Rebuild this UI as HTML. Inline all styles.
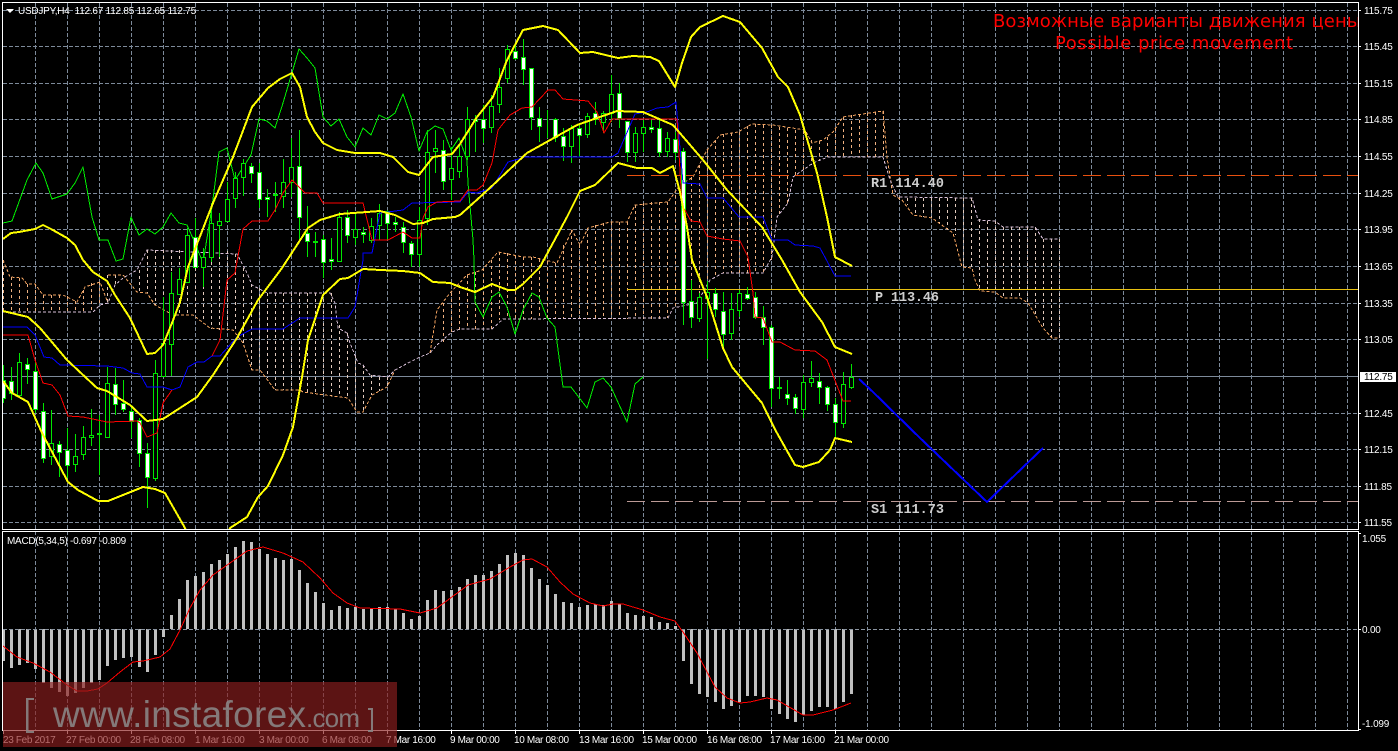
<!DOCTYPE html>
<html lang="en"><head><meta charset="utf-8"><title>USDJPY,H4</title>
<style>
html,body{margin:0;padding:0;background:#000;width:1398px;height:751px;overflow:hidden}
svg{display:block}
.t{font-family:"Liberation Sans",sans-serif;font-size:10px;fill:#fff;letter-spacing:-.2px}
.d{font-family:"Liberation Sans",sans-serif;font-size:10px;fill:#fff;letter-spacing:-.35px}
.m{font-family:"Liberation Mono",monospace;font-size:13.5px;font-weight:bold;fill:#cfcfcf}
.l{fill:none;stroke-linejoin:round;shape-rendering:crispEdges}
</style></head><body>
<svg width="1398" height="751" viewBox="0 0 1398 751" xmlns="http://www.w3.org/2000/svg">
<defs>
<clipPath id="c1"><rect x="3" y="3" width="1355" height="526"/></clipPath>
<clipPath id="c2"><rect x="3" y="532" width="1355" height="198"/></clipPath>
<clipPath id="c3"><rect x="900" y="3" width="458" height="60"/></clipPath>
</defs>
<rect width="1398" height="751" fill="#000"/>
<!-- grid -->
<g fill="none" stroke="#7d8a9a" stroke-width="1" stroke-dasharray="4 2" shape-rendering="crispEdges">
<path d="M35.5 3V730M67.5 3V730M99.5 3V730M131.5 3V730M163.5 3V730M195.5 3V730M227.5 3V730M259.5 3V730M291.5 3V730M323.5 3V730M355.5 3V730M387.5 3V730M419.5 3V730M451.5 3V730M483.5 3V730M515.5 3V730M547.5 3V730M579.5 3V730M611.5 3V730M643.5 3V730M675.5 3V730M707.5 3V730M739.5 3V730M771.5 3V730M803.5 3V730M835.5 3V730M867.5 3V730M899.5 3V730M931.5 3V730M963.5 3V730M995.5 3V730M1027.5 3V730M1059.5 3V730M1091.5 3V730M1123.5 3V730M1155.5 3V730M1187.5 3V730M1219.5 3V730M1251.5 3V730M1283.5 3V730M1315.5 3V730M1347.5 3V730"/>
<path d="M3 10.5H1358M3 46.5H1358M3 83.5H1358M3 119.5H1358M3 156.5H1358M3 193.5H1358M3 229.5H1358M3 266.5H1358M3 303.5H1358M3 339.5H1358M3 413.5H1358M3 449.5H1358M3 486.5H1358M3 522.5H1358"/>
</g>
<path d="M3 376.5H1358" stroke="#7d8a9a" shape-rendering="crispEdges"/>
<g clip-path="url(#c1)">
<!-- cloud hatch -->
<g fill="none" stroke-width="1" stroke-dasharray="3 3" shape-rendering="crispEdges">
<path stroke="#eeb080" d="M3.5 260V312M11.5 277V312M19.5 278V312M27.5 284V312M35.5 284V312M43.5 295V312M51.5 295V312M59.5 295V312M67.5 296V312M75.5 301V312M83.5 290V312M91.5 283V312M99.5 282V306M443.5 303V345M451.5 293V332M459.5 285V330M467.5 275V329M475.5 272V329M483.5 268V329M491.5 260V329M499.5 252V320M507.5 253V319M515.5 255V319M523.5 257V319M531.5 257V319M539.5 259V319M547.5 261V319M555.5 263V319M563.5 245V319M571.5 230V319M579.5 245V319M587.5 228V319M595.5 225V319M603.5 223V319M611.5 222V319M619.5 222V319M627.5 222V319M635.5 205V319M643.5 203V319M651.5 202V319M659.5 202V319M667.5 202V318M675.5 195V308M683.5 183V305M691.5 177V303M699.5 165V300M707.5 150V285M715.5 140V277M723.5 134V273M731.5 133V273M739.5 132V273M747.5 126V273M755.5 124V273M763.5 125V273M771.5 125V262M779.5 127V215M787.5 128V205M795.5 130V177M803.5 131V170M811.5 140V165M819.5 141V160M827.5 137V157M835.5 128V157M843.5 117V157M851.5 115V157M859.5 114V157M867.5 113V157M875.5 112V157M883.5 111V157"/>
<path stroke="#e2cabc" d="M107.5 275V303M115.5 275V285M139.5 270V292M147.5 250V293M155.5 250V305M163.5 250V312M171.5 250V315M179.5 250V315M187.5 250V315M195.5 250V316M203.5 250V322M211.5 250V329M219.5 250V330M227.5 251V330M235.5 254V330M243.5 268V343M251.5 284V370M259.5 288V370M267.5 293V378M275.5 293V390M283.5 293V390M291.5 293V390M299.5 293V390M307.5 293V392M315.5 293V394M323.5 293V395M331.5 293V396M339.5 325V397M347.5 333V398M355.5 355V410M363.5 365V412M371.5 375V395M379.5 377V391M387.5 377V387M891.5 185V190M899.5 197V200M907.5 198V205M915.5 198V214M923.5 198V217M931.5 198V218M939.5 198V224M947.5 198V230M955.5 198V235M963.5 198V268M971.5 198V270M979.5 219V291M987.5 221V291M995.5 221V292M1003.5 227V298M1011.5 227V298M1019.5 227V298M1027.5 227V303M1035.5 227V315M1043.5 239V328M1051.5 239V338M1059.5 239V338"/>
</g>
<!-- cloud spans -->
<polyline class="l" stroke="#f4a460" stroke-dasharray="3 2" points="3,260 10,277 22,278 27,284 35,284 43,295 63,295 77,302 85,287 100,282 108,303"/>
<polyline class="l" stroke="#f4a460" stroke-dasharray="3 2" points="108,275 123,275 128,281 137,292 147,293 155,305 173,315 193,315 210,328 233,330 243,343 252,370 260,370 275,390 300,390 303,392 340,397 348,398 357,412 363,412 372,395 387,387 395,370"/>
<polyline class="l" stroke="#f4a460" stroke-dasharray="3 2" points="430,353 437,310 450,293 467,275 482,270 498,252 523,257 533,257 557,263 572,230 580,245 588,228 610,222 627,222 635,205 668,202 680,185 693,177 707,150 720,135 738,132 752,124 773,125 805,130 812,143 823,140 833,132 843,117 883,111 887,157 893,195 902,200 913,215 932,218 953,233 962,267 972,268 975,280 980,291 995,292 1003,298 1020,298 1028,303 1043,328 1052,338 1059,338"/>
<polyline class="l" stroke="#d8bfd8" stroke-dasharray="3 2" points="3,312 93,312 100,305 108,303 115,285 123,278 137,270 147,250 237,254 247,273 252,285 267,293 330,293 335,303 338,328 347,333 350,343 358,363 363,365 370,375 388,377 395,370 410,362 420,357 430,353 437,345 452,332 460,329 492,329 503,319 668,318 673,308 697,303 710,280 723,273 763,273 772,257 777,217 788,203 793,177 813,163 828,157 883,157 890,180 898,197 972,198 978,220 995,221 1003,227 1035,227 1043,239 1059,239"/>
<!-- levels -->
<g shape-rendering="crispEdges" fill="none">
<path d="M627 175.5H1358" stroke="#e8500f" stroke-dasharray="18 6"/>
<path d="M627 289.5H1358" stroke="#e8c010"/>
<path d="M627 501.5H1358" stroke="#bc9a96" stroke-dasharray="18 6"/>
</g>
<!-- chikou -->
<polyline class="l" stroke="#00f000" points="3,223 12,221 27,180 36,163 43,173 52,199 67,194 75,183 83,167 92,217 99,240 108,240 116,261 123,259 131,217 139,235 147,229 155,234 163,227 171,213 179,223 187,225 195,243 203,263 212,207 219,152 227,148 235,180 251,155 259,119 267,121 275,128 283,103 299,49 307,58 315,68 323,117 331,126 339,119 347,137 355,147 363,128 371,135 379,115 387,119 395,113 403,94 411,117 419,151 427,132 435,126 443,129 451,150 459,138 467,160 468,183 473,240 474,260 475,302 483,317 492,297 499,292 507,307 515,334 523,310 532,293 539,297 547,318 555,327 563,387 571,387 587,408 595,382 603,378 611,387 627,422 635,384 643,377"/>
<!-- candles -->
<path fill="none" stroke="#00e600" shape-rendering="crispEdges" d="M3.5 365V403M11.5 367V400M19.5 353V395M27.5 358V384M35.5 362V413M43.5 403V463M51.5 410V465M59.5 441V477M67.5 428V478M75.5 434V472M83.5 426V460M91.5 409V446M99.5 415V475M107.5 367V437M115.5 368V415M123.5 380V412M131.5 405V438M139.5 418V467M147.5 443V508M155.5 360V481M163.5 297V376M171.5 272V376M179.5 268V294M187.5 228V282M195.5 218V267M203.5 248V287M211.5 203V262M219.5 213V257M227.5 182V222M235.5 172V208M243.5 159V196M251.5 163V183M259.5 163V208M267.5 189V217M275.5 182V212M283.5 159V208M291.5 138V197M299.5 130V240M307.5 206V257M315.5 232V257M323.5 235V278M331.5 238V270M339.5 212V262M347.5 210V243M355.5 213V245M363.5 227V243M371.5 218V243M379.5 204V240M387.5 210V240M395.5 217V232M403.5 222V253M411.5 241V267M419.5 207V267M427.5 130V225M435.5 130V173M443.5 140V190M451.5 147V200M459.5 145V178M467.5 107V160M475.5 115V152M483.5 105V143M491.5 95V133M499.5 68V113M507.5 45V83M515.5 45V60M523.5 39V85M531.5 68V130M539.5 107V142M547.5 110V138M555.5 118V142M563.5 128V161M571.5 125V163M579.5 123V157M587.5 113V138M595.5 102V125M603.5 111V133M611.5 75V122M619.5 83V128M627.5 121V162M635.5 127V162M643.5 120V152M651.5 120V133M659.5 120V157M667.5 132V157M675.5 132V160M683.5 148V325M691.5 280V328M699.5 293V322M707.5 281V359M715.5 288V317M723.5 292V350M731.5 293V340M739.5 290V317M747.5 287V300M755.5 292V319M763.5 306V345M771.5 325V407M779.5 377V399M787.5 380V405M795.5 394V414M803.5 375V418M811.5 361V387M819.5 373V404M827.5 386V411M835.5 398V437M843.5 372V428M851.5 364V389"/>
<path fill="#000" stroke="#00e600" shape-rendering="crispEdges" d="M17.5 362.5h4v33h-4zM49.5 443.5h4v13h-4zM73.5 456.5h4v8h-4zM81.5 437.5h4v17h-4zM89.5 435.5h4v2h-4zM97.5 433.5h4v1h-4zM105.5 383.5h4v54h-4zM153.5 373.5h4v105h-4zM161.5 343.5h4v33h-4zM169.5 293.5h4v51h-4zM177.5 279.5h4v15h-4zM185.5 235.5h4v47h-4zM201.5 257.5h4v10h-4zM209.5 223.5h4v34h-4zM217.5 221.5h4v4h-4zM225.5 199.5h4v22h-4zM233.5 178.5h4v20h-4zM241.5 163.5h4v14h-4zM281.5 182.5h4v14h-4zM289.5 167.5h4v15h-4zM337.5 217.5h4v44h-4zM353.5 229.5h4v8h-4zM369.5 226.5h4v14h-4zM377.5 213.5h4v12h-4zM417.5 220.5h4v34h-4zM425.5 152.5h4v66h-4zM433.5 148.5h4v3h-4zM449.5 168.5h4v11h-4zM457.5 156.5h4v15h-4zM465.5 119.5h4v37h-4zM489.5 106.5h4v21h-4zM497.5 87.5h4v17h-4zM505.5 49.5h4v29h-4zM569.5 128.5h4v18h-4zM585.5 116.5h4v18h-4zM601.5 113.5h4v9h-4zM609.5 94.5h4v19h-4zM633.5 133.5h4v19h-4zM641.5 127.5h4v6h-4zM665.5 138.5h4v13h-4zM697.5 297.5h4v21h-4zM705.5 292.5h4v6h-4zM729.5 309.5h4v24h-4zM737.5 293.5h4v17h-4zM801.5 382.5h4v27h-4zM809.5 378.5h4v4h-4zM841.5 384.5h4v39h-4zM849.5 377.5h4v10h-4z"/>
<path fill="#fff" stroke="#00e600" shape-rendering="crispEdges" d="M1.5 380.5h4v18h-4zM9.5 381.5h4v12h-4zM25.5 364.5h4v5h-4zM33.5 371.5h4v38h-4zM41.5 411.5h4v47h-4zM57.5 444.5h4v8h-4zM65.5 450.5h4v15h-4zM113.5 384.5h4v20h-4zM121.5 403.5h4v6h-4zM129.5 411.5h4v10h-4zM137.5 420.5h4v33h-4zM145.5 453.5h4v24h-4zM193.5 237.5h4v30h-4zM249.5 166.5h4v7h-4zM257.5 172.5h4v27h-4zM265.5 197.5h4v2h-4zM273.5 194.5h4v1h-4zM297.5 166.5h4v51h-4zM305.5 233.5h4v8h-4zM313.5 241.5h4v1h-4zM321.5 239.5h4v23h-4zM329.5 259.5h4v2h-4zM345.5 217.5h4v18h-4zM361.5 232.5h4v2h-4zM385.5 211.5h4v12h-4zM393.5 222.5h4v2h-4zM401.5 227.5h4v15h-4zM409.5 243.5h4v11h-4zM441.5 150.5h4v31h-4zM473.5 119.5h4v2h-4zM481.5 119.5h4v9h-4zM513.5 51.5h4v7h-4zM521.5 57.5h4v12h-4zM529.5 68.5h4v49h-4zM537.5 118.5h4v8h-4zM553.5 119.5h4v18h-4zM561.5 136.5h4v10h-4zM577.5 128.5h4v7h-4zM593.5 113.5h4v6h-4zM617.5 93.5h4v25h-4zM625.5 121.5h4v31h-4zM649.5 127.5h4v2h-4zM657.5 128.5h4v24h-4zM673.5 139.5h4v13h-4zM681.5 151.5h4v151h-4zM689.5 301.5h4v16h-4zM713.5 293.5h4v16h-4zM721.5 311.5h4v23h-4zM745.5 294.5h4v4h-4zM753.5 297.5h4v20h-4zM761.5 317.5h4v10h-4zM769.5 327.5h4v61h-4zM777.5 387.5h4v1h-4zM785.5 394.5h4v4h-4zM793.5 397.5h4v11h-4zM817.5 381.5h4v6h-4zM825.5 387.5h4v17h-4zM833.5 404.5h4v18h-4z"/>
<!-- kijun -->
<polyline class="l" stroke="#0000ff" points="3,327 27,327 35,335 44,357 52,358 60,365 107,366 123,368 132,373 140,374 147,387 163,387 172,390 180,387 188,367 197,362 204,362 212,356 220,356 237,337 252,329 283,329 300,318 348,318 355,307 363,260 363,253 372,253 380,213 403,210 412,203 460,202 468,192 477,193 492,188 508,162 525,157 612,157 618,153 635,114 647,112 657,108 668,107 676,102 683,183 700,184 707,198 723,198 739,217 763,217 772,240 788,240 795,245 813,246 820,248 835,276 851,276"/>
<!-- tenkan -->
<polyline class="l" stroke="#ff0000" points="3,335 28,335 35,360 43,383 52,385 60,395 68,416 83,417 107,422 137,421 140,423 147,437 157,433 163,403 172,390"/>
<polyline class="l" stroke="#ff0000" points="212,356 220,340 227,280 235,273 236,267 243,229 252,221 268,221 275,210 283,193 292,180 305,193 317,193 323,203 363,203 372,240 388,240 403,232 412,238 420,238 423,218 428,207 437,202 460,201 468,190 477,190 483,185 492,163 498,130 510,115 522,108 532,107 548,90 555,90 563,99 588,101 597,112 604,133 612,119 677,119 682,205 691,221 700,222 707,236 723,239 740,241 748,257 753,293 755,317 763,318 772,342 780,342 795,350 815,351 827,360 843,401 851,401"/>
<!-- bollinger -->
<g fill="none" stroke="#ffff00" stroke-width="2" stroke-linejoin="round" shape-rendering="crispEdges">
<polyline points="3,239 11,233 19,232 35,229 43,225 51,229 67,238 75,245 83,260 93,272 107,281 115,295 130,318 147,354 155,353 163,345 172,323 180,302 188,267 213,203 233,157 252,107 268,88 280,79 292,73 300,87 307,117 315,132 323,143 337,150 355,153 380,153 393,157 408,172 419,175 433,157 452,154 460,144 477,117 493,97 507,60 523,30 543,26 558,30 580,53 593,52 618,58 633,56 650,57 659,61 675,87 682,63 691,37 700,27 723,16 740,22 762,48 778,77 788,87 800,115 817,173 827,217 835,257 852,266"/>
<polyline points="3,311 28,317 40,328 67,360 97,388 107,391 130,405 147,421 163,419 197,397 213,375 237,338 258,300 282,268 308,228 320,220 340,214 380,211 395,215 413,224 423,223 433,219 455,217 460,215 480,197 493,185 527,153 577,125 617,111 643,112 673,125 703,160 727,190 762,227 782,260 800,292 822,322 835,347 852,354"/>
<polyline points="3,381 12,393 28,402 42,433 68,482 78,490 98,501 108,501 143,487 155,489 165,493 185,528 190,540"/>
<polyline points="225,540 230,528 247,517 258,497 268,486 283,455 293,427 302,377 308,340 323,295 340,279 348,278 363,269 380,270 403,271 420,273 433,282 450,283 460,287 475,292 492,284 508,290 515,290 523,284 540,267 567,217 580,191 595,185 618,163 637,168 652,168 660,173 673,166 680,192 687,227 692,260 707,297 723,348 732,367 762,403 777,433 795,465 803,467 819,462 830,450 835,438 852,442"/>
</g>
<!-- forecast -->
<polyline class="l" stroke="#0000ff" stroke-width="2" points="859,379 873,392 920,438 987,502 1043,448"/>
</g>
<text class="m" x="871" y="187" textLength="73">R1 114.40</text>
<text class="m" x="875" y="301" textLength="64">P 113.46</text>
<text class="m" x="871" y="513" textLength="73">S1 111.73</text>
<!-- macd -->
<g clip-path="url(#c2)">
<path fill="#c0c0c0" shape-rendering="crispEdges" d="M2 629h3v32h-3zM10 629h3v39h-3zM18 629h3v36h-3zM26 629h3v34h-3zM34 629h3v40h-3zM42 629h3v54h-3zM50 629h3v59h-3zM58 629h3v63h-3zM66 629h3v67h-3zM74 629h3v64h-3zM82 629h3v59h-3zM90 629h3v54h-3zM98 629h3v51h-3zM106 629h3v37h-3zM114 629h3v31h-3zM122 629h3v29h-3zM130 629h3v28h-3zM138 629h3v38h-3zM146 629h3v43h-3zM154 629h3v26h-3zM162 629h3v8h-3zM170 615h3v14h-3zM178 599h3v30h-3zM186 580h3v49h-3zM194 576h3v53h-3zM202 572h3v57h-3zM210 564h3v65h-3zM218 560h3v69h-3zM226 554h3v75h-3zM234 547h3v82h-3zM242 541h3v88h-3zM250 542h3v87h-3zM258 549h3v80h-3zM266 554h3v75h-3zM274 558h3v71h-3zM282 560h3v69h-3zM290 559h3v70h-3zM298 570h3v59h-3zM306 583h3v46h-3zM314 592h3v37h-3zM322 603h3v26h-3zM330 610h3v19h-3zM338 606h3v23h-3zM346 608h3v21h-3zM354 607h3v22h-3zM362 609h3v20h-3zM370 608h3v21h-3zM378 607h3v22h-3zM386 607h3v22h-3zM394 609h3v20h-3zM402 613h3v16h-3zM410 619h3v10h-3zM418 616h3v13h-3zM426 600h3v29h-3zM434 590h3v39h-3zM442 591h3v38h-3zM450 590h3v39h-3zM458 587h3v42h-3zM466 579h3v50h-3zM474 575h3v54h-3zM482 575h3v54h-3zM490 571h3v58h-3zM498 564h3v65h-3zM506 555h3v74h-3zM514 553h3v76h-3zM522 555h3v74h-3zM530 568h3v61h-3zM538 579h3v50h-3zM546 585h3v44h-3zM554 594h3v35h-3zM562 602h3v27h-3zM570 603h3v26h-3zM578 607h3v22h-3zM586 605h3v24h-3zM594 604h3v25h-3zM602 605h3v24h-3zM610 601h3v28h-3zM618 604h3v25h-3zM626 613h3v16h-3zM634 615h3v14h-3zM642 616h3v13h-3zM650 617h3v12h-3zM658 622h3v7h-3zM666 623h3v6h-3zM674 626h3v3h-3zM682 629h3v32h-3zM690 629h3v55h-3zM698 629h3v65h-3zM706 629h3v68h-3zM714 629h3v73h-3zM722 629h3v80h-3zM730 629h3v77h-3zM738 629h3v73h-3zM746 629h3v67h-3zM754 629h3v67h-3zM762 629h3v68h-3zM770 629h3v80h-3zM778 629h3v85h-3zM786 629h3v90h-3zM794 629h3v93h-3zM802 629h3v86h-3zM810 629h3v82h-3zM818 629h3v78h-3zM826 629h3v78h-3zM834 629h3v80h-3zM842 629h3v73h-3zM850 629h3v65h-3z"/>
<path d="M3 629.5H1358" fill="none" stroke="#8a94a0" stroke-dasharray="4 2" shape-rendering="crispEdges"/>
<polyline class="l" stroke="#ff0000" points="3,646 17,657 33,663 50,672 67,685 77,691 87,691 98,689 107,683 120,672 133,662 143,661 160,657 170,649 180,630 190,608 200,590 213,575 230,563 247,551 263,547 283,553 303,562 320,578 333,593 347,603 360,608 400,609 420,613 437,608 460,591 468,585 490,579 510,567 523,560 532,559 547,567 560,582 573,594 590,603 603,606 613,604 623,604 643,610 660,617 675,621 683,632 697,653 715,687 727,698 740,703 750,702 767,698 777,700 803,715 813,715 833,710 851,703"/>
</g>
<!-- frames -->
<g fill="none" stroke="#fff" shape-rendering="crispEdges">
<path d="M2.5 2.5H1358.5V529.5H2.5Z"/>
<path d="M2.5 531.5H1358.5V730.5H2.5Z"/>
<path d="M1358 10.5h3M1358 46.5h3M1358 83.5h3M1358 119.5h3M1358 156.5h3M1358 193.5h3M1358 229.5h3M1358 266.5h3M1358 303.5h3M1358 339.5h3M1358 413.5h3M1358 449.5h3M1358 486.5h3M1358 522.5h3M1358 533.5h3M1358 629.5h3M1358 729.5h3"/>
<path d="M3.5 730v4M67.5 730v4M131.5 730v4M195.5 730v4M259.5 730v4M323.5 730v4M387.5 730v4M451.5 730v4M515.5 730v4M579.5 730v4M643.5 730v4M707.5 730v4M771.5 730v4M835.5 730v4"/>
</g>
<!-- header -->
<path d="M6 9h8l-4 4z" fill="#fff"/>
<text class="t" x="18" y="14" textLength="178" xml:space="preserve">USDJPY,H4  112.67 112.85 112.65 112.75</text>
<text class="t" x="7" y="544" textLength="119">MACD(5,34,5) -0.697 -0.809</text>
<!-- title -->
<g clip-path="url(#c3)" font-family="'DejaVu Sans',sans-serif" font-size="18" fill="#ff0000">
<text x="993" y="27" textLength="368">Возможные варианты движения цены</text>
<text x="1055" y="49" textLength="238">Possible price movement</text>
</g>
<!-- price axis -->
<g class="t">
<text x="1364" y="14">115.75</text><text x="1364" y="50">115.45</text><text x="1364" y="87">115.15</text><text x="1364" y="123">114.85</text><text x="1364" y="160">114.55</text><text x="1364" y="197">114.25</text><text x="1364" y="233">113.95</text><text x="1364" y="270">113.65</text><text x="1364" y="307">113.35</text><text x="1364" y="343">113.05</text><text x="1364" y="417">112.45</text><text x="1364" y="453">112.15</text><text x="1364" y="490">111.85</text><text x="1364" y="526">111.55</text>
<text x="1362" y="542">1.055</text><text x="1362" y="633">0.00</text><text x="1362" y="727">-1.099</text>
</g>
<rect x="1360" y="372" width="36" height="10" fill="#fff"/>
<text class="t" x="1364" y="380" style="fill:#000">112.75</text>
<!-- date axis -->
<g class="d">
<text x="3" y="743">23 Feb 2017</text><text x="66" y="743">27 Feb 00:00</text><text x="130" y="743">28 Feb 08:00</text><text x="195" y="743">1 Mar 16:00</text><text x="259" y="743">3 Mar 00:00</text><text x="322" y="743">6 Mar 08:00</text><text x="386" y="743">7 Mar 16:00</text><text x="450" y="743">9 Mar 00:00</text><text x="514" y="743">10 Mar 08:00</text><text x="579" y="743">13 Mar 16:00</text><text x="642" y="743">15 Mar 00:00</text><text x="707" y="743">16 Mar 08:00</text><text x="770" y="743">17 Mar 16:00</text><text x="834" y="743">21 Mar 00:00</text>
</g>
<!-- watermark -->
<rect x="3" y="682" width="394" height="65" fill="#8c1e1e" fill-opacity=".66"/>
<g fill="#8a8787" fill-opacity=".88" stroke="none">
<path d="M34 698H26V733H34V731H28.5V700H34Z"/>
<path d="M368 708H373V732H368V730H371V710H368Z"/>
<text x="53" y="727" font-family="'Liberation Sans',sans-serif" font-size="37" textLength="253">www.instaforex</text>
<text x="306" y="727" font-family="'Liberation Sans',sans-serif" font-size="26" textLength="54">.com</text>
</g>
</svg>
</body></html>
